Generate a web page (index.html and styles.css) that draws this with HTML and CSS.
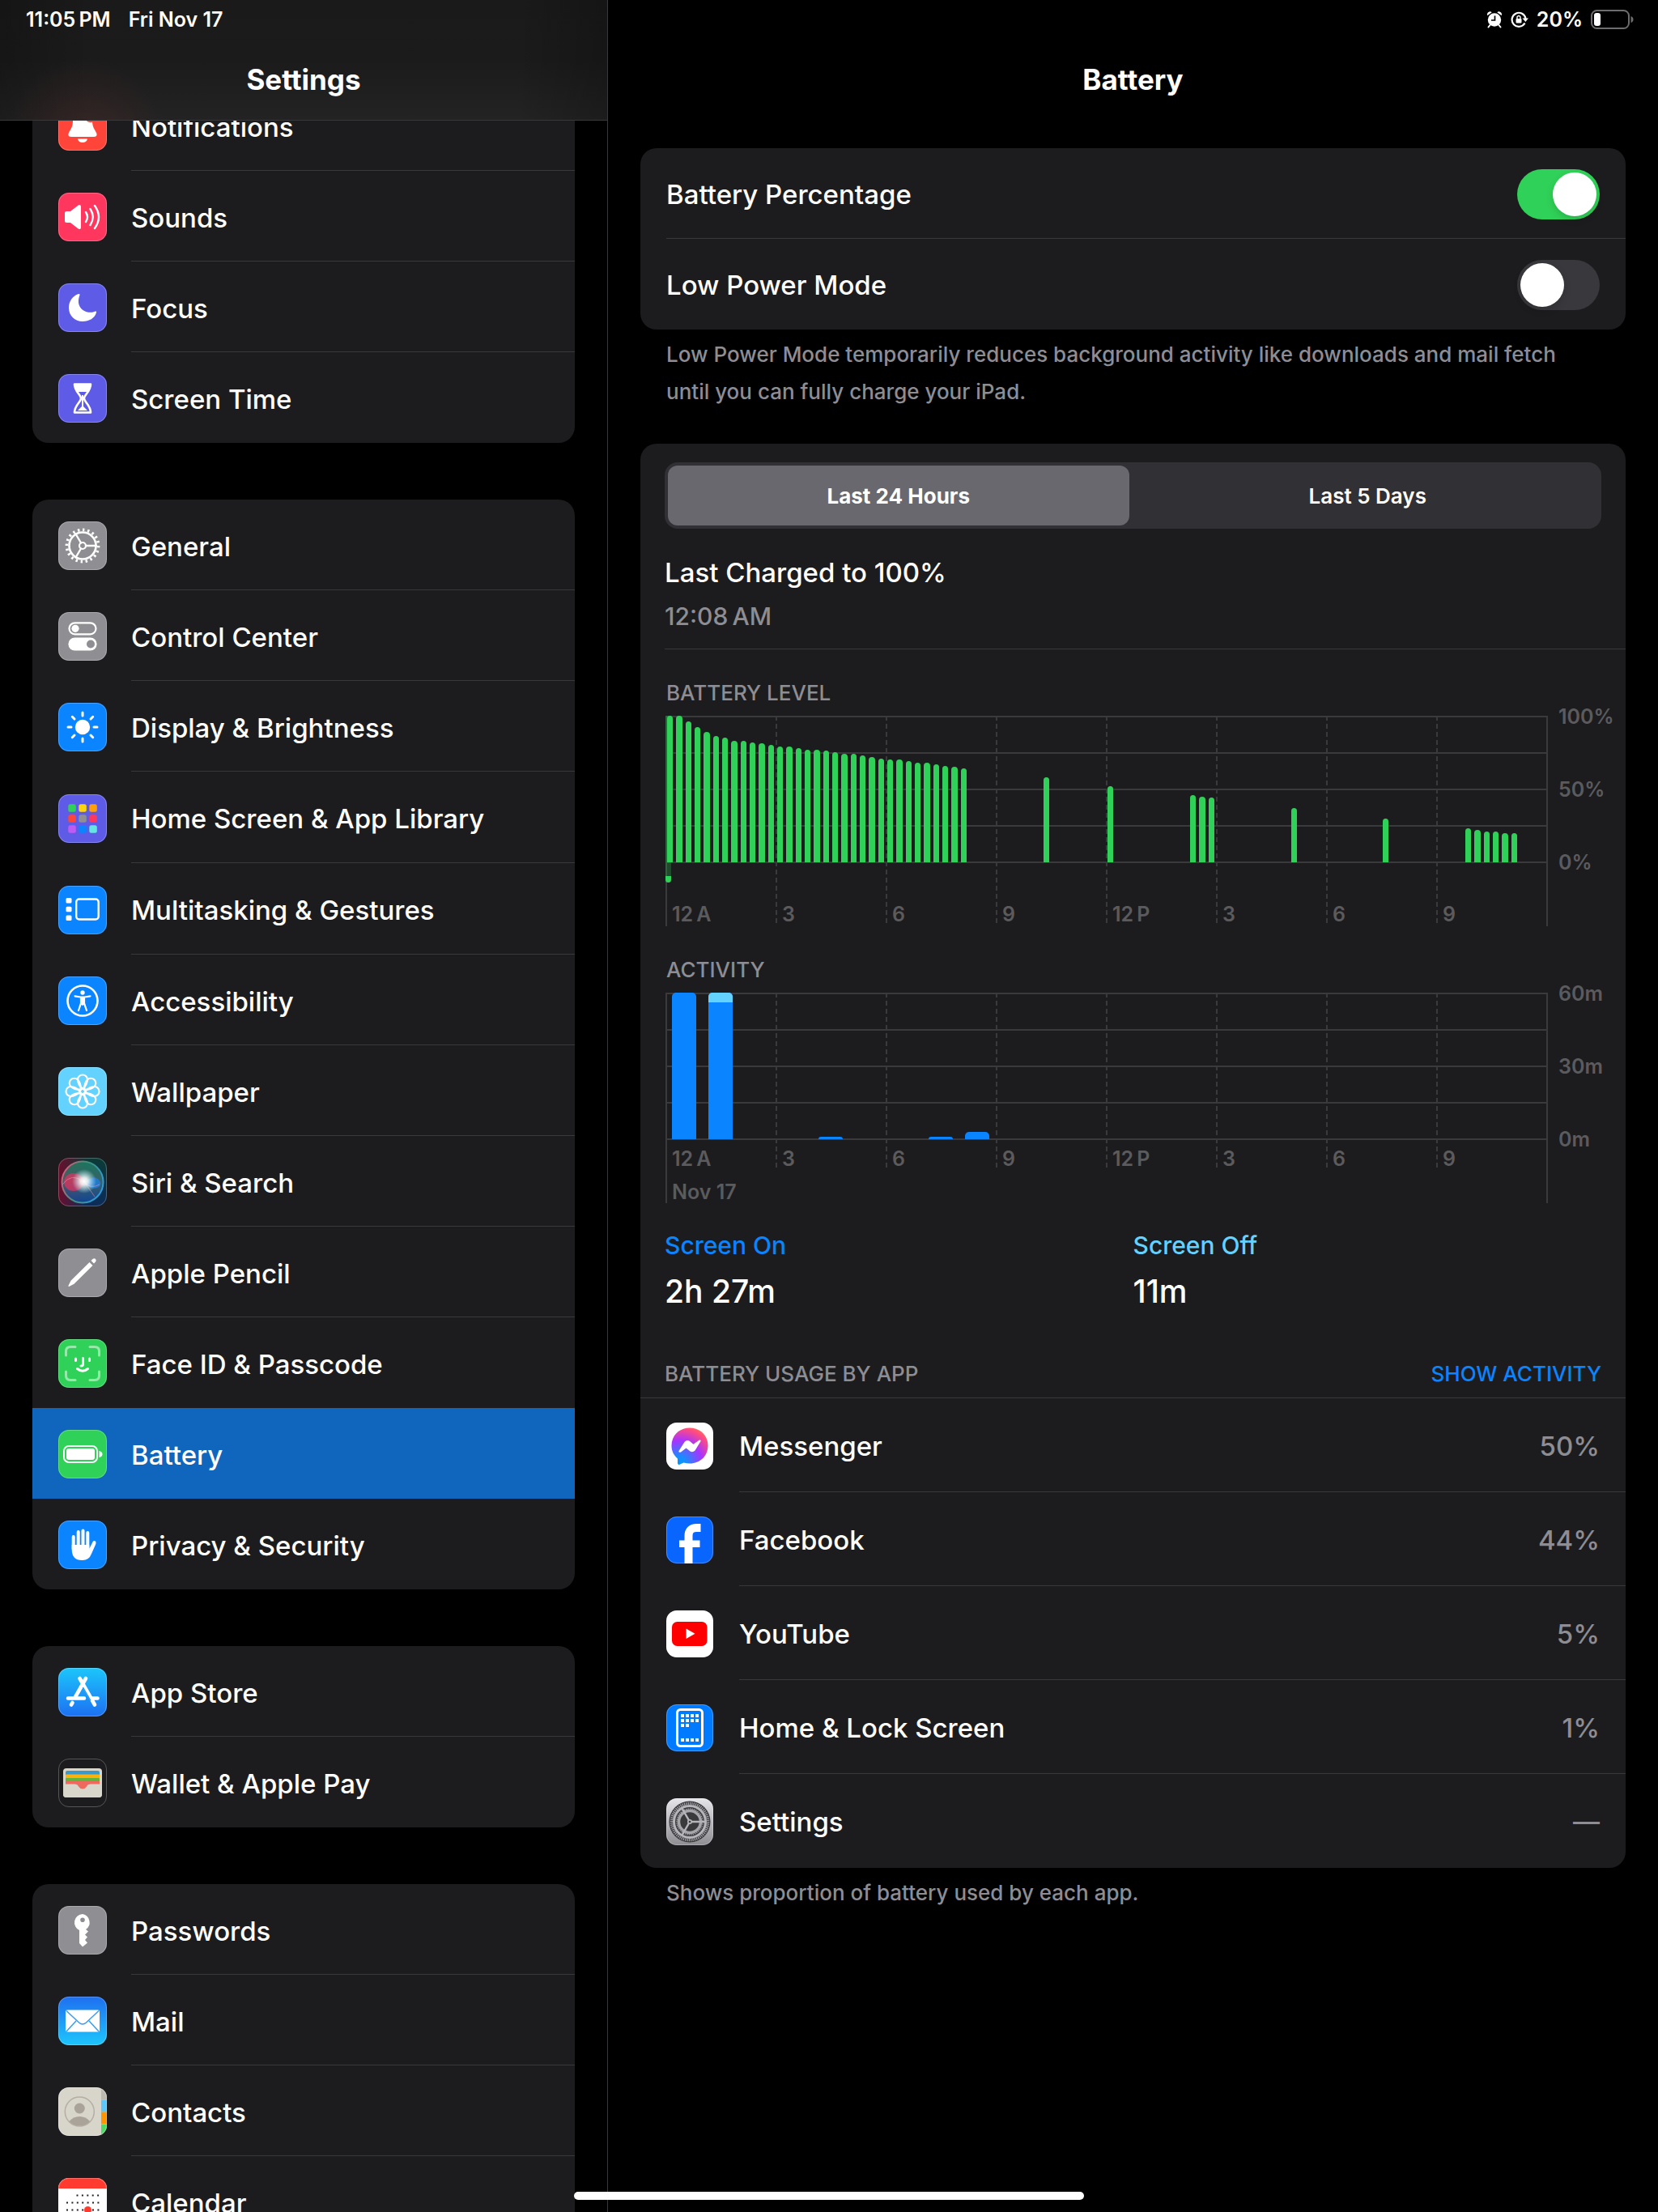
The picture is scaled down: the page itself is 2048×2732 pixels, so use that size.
FILE: index.html
```html
<!DOCTYPE html>
<html lang="en">
<head>
  <meta charset="UTF-8" />
  <meta name="viewport" content="width=device-width, initial-scale=1.0"/>
  <title>Settings - Battery</title>
  <link rel="stylesheet" href="styles.css">
</head>
<body>
  <div class="app">

    <aside class="sidebar">
      <header class="topbar sidebar-top">
        <div class="status">
          <span>11:05&thinsp;PM</span>
          <span>Fri Nov 17</span>
        </div>
        <h2 class="title">Settings</h2>
      </header>

      <nav class="menu">
        <div class="card">
          <a class="row" href="#notifications">
            <svg class="icon red" viewBox="0 0 60 60"><path fill="#fff" d="M30 9c-8 0-12 6-12 14 0 8-3 11-5 15-1 2-1 5 3 5h28c4 0 4-3 3-5-2-4-5-7-5-15 0-8-4-14-12-14zM24 45.500h12c-1 6-11 6-12 0z"/><circle cx="40" cy="17" r="7" fill="#fff" stroke="#ff453a" stroke-width="2.500"/></svg>
            <span class="label">Notifications</span>
          </a>
          <a class="row" href="#sounds">
            <svg class="icon pink" viewBox="0 0 60 60"><path fill="#fff" d="M10 23h5l9-7c2-2 4-1 4 1v26c0 2-2 3-4 1l-9-7h-5q-2 0-2-2V25q0-2 2-2z"/><path class="stroke" stroke-width="2.400" d="M34 24q4 6 0 12M39.500 20q6.500 10 0 20M45 16q10 14 0 28"/></svg>
            <span class="label">Sounds</span>
          </a>
          <a class="row" href="#focus">
            <svg class="icon indigo" viewBox="0 0 60 60"><path fill="#fff" d="M25 13C18 15 13 22 13 30c0 10 7.500 17 17 17 8 0 15-4 17-11 .5-1.500-.5-2-2-1.300-3 1.300-6 1.300-8 1C28 34 22 26 26.500 14.500q.5-2-1.500-1.500z"/></svg>
            <span class="label">Focus</span>
          </a>
          <a class="row" href="#screen-time">
            <svg class="icon indigo" viewBox="0 0 60 60"><path class="stroke" stroke-width="2.600" stroke-linejoin="round" d="M20 12.500h20c0 9-8 13-8 17.500s8 8.500 8 17.500H20c0-9 8-13 8-17.500s-8-8.500-8-17.500z"/><path fill="#fff" d="M20 12h20v5q-1 3-3 5H23q-2-2-3-5zM29 26h2v14l5 5H24l5-5z"/></svg>
            <span class="label">Screen Time</span>
          </a>
        </div>

        <div class="card">
          <a class="row" href="#general">
            <svg class="icon gray" viewBox="0 0 60 60"><g class="stroke"><circle cx="30" cy="30" r="16.500" stroke-width="2.600"/><circle cx="30" cy="30" r="19.600" stroke-width="3.600" pathLength="40" stroke-dasharray=".8 1.200" stroke-linecap="butt"/><circle cx="30" cy="30" r="4" stroke-width="2.200"/><path stroke-width="2.400" d="M34 30h13M28 26.500l-6.500-11M28 33.500l-6.500 11"/></g></svg>
            <span class="label">General</span>
          </a>
          <a class="row" href="#control-center">
            <svg class="icon gray" viewBox="0 0 60 60"><rect class="stroke" x="13.500" y="13.300" width="33" height="14" rx="7" stroke-width="2.200"/><circle cx="21" cy="20.300" r="4.600" fill="#fff"/><rect x="12.400" y="31.500" width="35.200" height="16" rx="8" fill="#fff"/><circle cx="40" cy="39.500" r="5" fill="#8e8e93"/></svg>
            <span class="label">Control Center</span>
          </a>
          <a class="row" href="#display">
            <svg class="icon blue" viewBox="0 0 60 60"><circle cx="30" cy="30" r="9.200" fill="#fff"/><path class="stroke" stroke-width="3" d="M30 12v4M30 44v4M12 30h4M44 30h4M17.300 17.300l2.700 2.700M40 40l2.700 2.700M42.700 17.300L40 20M20 40l-2.700 2.700"/></svg>
            <span class="label">Display &amp; Brightness</span>
          </a>
          <a class="row row-tall" href="#home-screen">
            <svg class="icon indigo" viewBox="0 0 60 60"><rect x="12.300" y="12.300" width="9.500" height="9.500" rx="2.500" fill="#30d158"/><rect x="25.300" y="12.300" width="9.500" height="9.500" rx="2.500" fill="#ffd60a"/><rect x="38.300" y="12.300" width="9.500" height="9.500" rx="2.500" fill="#ff9f0a"/><rect x="12.300" y="25.300" width="9.500" height="9.500" rx="2.500" fill="#ff453a"/><rect x="25.300" y="25.300" width="9.500" height="9.500" rx="2.500" fill="#8e8e93"/><rect x="38.300" y="25.300" width="9.500" height="9.500" rx="2.500" fill="#ff375f"/><rect x="12.300" y="38.300" width="9.500" height="9.500" rx="2.500" fill="#bf5af2"/><rect x="25.300" y="38.300" width="9.500" height="9.500" rx="2.500" fill="#0a84ff"/><rect x="38.300" y="38.300" width="9.500" height="9.500" rx="2.500" fill="#63e6e2"/></svg>
            <span class="label">Home Screen &amp; App Library</span>
          </a>
          <a class="row row-tall" href="#multitasking">
            <svg class="icon blue" viewBox="0 0 60 60"><g fill="#fff"><rect x="9.500" y="15" width="7" height="6.500" rx="1.500"/><rect x="9.500" y="25.800" width="7" height="6.500" rx="1.500"/><rect x="9.500" y="36.500" width="7" height="6.500" rx="1.500"/></g><rect class="stroke" x="22.200" y="16.500" width="27.500" height="25" rx="3.500" stroke-width="2.400"/></svg>
            <span class="label">Multitasking &amp; Gestures</span>
          </a>
          <a class="row" href="#accessibility">
            <svg class="icon blue" viewBox="0 0 60 60"><circle class="stroke" cx="30" cy="30" r="18.500" stroke-width="2.600"/><circle cx="30" cy="20" r="2.700" fill="#fff"/><path class="stroke" stroke-width="2.200" d="M20.500 24.300l7 1.200h5l7-1.200M28 26v7l-3 9M32 26v7l3 9"/><path fill="#fff" d="M27 25h6v9l-3 2-3-2z"/></svg>
            <span class="label">Accessibility</span>
          </a>
          <a class="row" href="#wallpaper">
            <svg class="icon sky" viewBox="0 0 60 60"><g class="stroke" stroke-width="2.200"><path id="petal" d="M30 27C25 22 24 19.500 24 15.500a6 6 0 0 1 12 0C36 19.500 35 22 30 27z"/><use href="#petal" transform="rotate(45 30 30)"/><use href="#petal" transform="rotate(90 30 30)"/><use href="#petal" transform="rotate(135 30 30)"/><use href="#petal" transform="rotate(180 30 30)"/><use href="#petal" transform="rotate(225 30 30)"/><use href="#petal" transform="rotate(270 30 30)"/><use href="#petal" transform="rotate(315 30 30)"/><circle cx="30" cy="30" r="3.500"/></g></svg>
            <span class="label">Wallpaper</span>
          </a>
          <a class="row" href="#siri">
            <svg class="icon siri" viewBox="0 0 60 60">
              <defs>
                <radialGradient id="glow"><stop offset="0" stop-color="#fff"/><stop offset=".3" stop-color="#fff" stop-opacity=".85"/><stop offset="1" stop-color="#bff" stop-opacity="0"/></radialGradient>
                <linearGradient id="orb" x1="0" y1=".3" x2="1" y2=".7"><stop offset="0" stop-color="#d0607a"/><stop offset=".45" stop-color="#3f8f7c"/><stop offset="1" stop-color="#2f9be0"/></linearGradient>
                <linearGradient id="orb-fill" x1=".5" y1="0" x2=".5" y2="1"><stop offset="0" stop-color="#1e8a68"/><stop offset=".5" stop-color="#4b6f76"/><stop offset="1" stop-color="#0f4ea8"/></linearGradient>
              </defs>
              <circle cx="30" cy="30" r="25" fill="url(#orb-fill)" opacity=".75"/>
              <circle cx="30" cy="30" r="25.500" fill="none" stroke="url(#orb)" stroke-width="2"/>
              <ellipse cx="19" cy="30" rx="12" ry="11" fill="#e8315f" opacity=".7"/>
              <path d="M32 31q9-10 17-5 6 6 1 10-9 5-18-5z" fill="#1f7ee0" opacity=".8"/>
              <path d="M5 33q12-16 26-3 9 9 20 3M33 31l12 17" fill="none" stroke="#ff9db6" stroke-opacity=".5"/>
              <circle cx="32" cy="29" r="15" fill="url(#glow)"/>
            </svg>
            <span class="label">Siri &amp; Search</span>
          </a>
          <a class="row" href="#pencil">
            <svg class="icon gray" viewBox="0 0 60 60"><path fill="#fff" d="M13.300 47q-1.300 0-.8-1.300l3-6L38.500 17l4 4L19.500 43.800zM40.500 15l2-2q2-1.500 3.500 0t0 3.500l-2 2z"/></svg>
            <span class="label">Apple Pencil</span>
          </a>
          <a class="row" href="#face-id">
            <svg class="icon green" viewBox="0 0 60 60"><path class="stroke" stroke-width="3" opacity=".5" d="M9.500 20v-5q0-5.500 5.500-5.500h6M50.500 20v-5q0-5.500-5.500-5.500h-6M9.500 40v5q0 5.500 5.500 5.500h6M50.500 40v5q0 5.500-5.500 5.500h-6"/><path class="stroke" stroke-width="3" d="M21.500 24v2.500M38.500 24v2.500M30.500 23.500v7.500q0 2-2.500 2M23.500 36.500q6.500 5.500 13 0"/></svg>
            <span class="label">Face ID &amp; Passcode</span>
          </a>
          <a class="row selected" href="#battery">
            <svg class="icon green" viewBox="0 0 60 60"><rect class="stroke" x="7" y="20" width="41" height="20" rx="6" stroke-width="2"/><rect x="10" y="23" width="35" height="14" rx="3" fill="#fff"/><path fill="#fff" d="M50.500 26q4 1 4 4t-4 4z"/></svg>
            <span class="label">Battery</span>
          </a>
          <a class="row" href="#privacy">
            <svg class="icon blue" viewBox="0 0 60 60"><path class="stroke" stroke-width="4" d="M18.700 20v15M24.700 14v20M30.500 12.500V34M36.300 15v20M44.500 27l-6 12"/><path fill="#fff" d="M16.700 30h21.600v6l7-8q1.500-1 1 1L41 41q-3 8-11 8h-1q-12 0-12.300-13z"/></svg>
            <span class="label">Privacy &amp; Security</span>
          </a>
        </div>

        <div class="card">
          <a class="row" href="#app-store">
            <svg class="icon store" viewBox="0 0 60 60"><path class="stroke" stroke-width="4.600" d="M34 13L21 36M26.500 13L45 45.500M17.500 43L16 45.500M12 37.500h20M42.500 37.500h6"/><path stroke="#1d94f7" stroke-width="1.300" fill="none" d="M30.500 24L40 40.500"/></svg>
            <span class="label">App Store</span>
          </a>
          <a class="row" href="#wallet">
            <svg class="icon wallet" viewBox="0 0 60 60"><rect x="6" y="12" width="48" height="36" rx="4" fill="#d9d6cc"/><rect x="9" y="15" width="42" height="8" rx="2" fill="#3b99c9"/><rect x="9" y="19.500" width="42" height="8" rx="1" fill="#fdb10a"/><rect x="9" y="24" width="42" height="8" rx="1" fill="#62b53c"/><path d="M9 28h42v5H40q-4 5-10 5t-10-5H9z" fill="#ee6a5f"/><path d="M6 31.500h14q4 0 5 3 2 3 5 3t5-3q1-3 5-3h14V44q0 4-4 4H10q-4 0-4-4z" fill="#d9d6cc"/></svg>
            <span class="label">Wallet &amp; Apple Pay</span>
          </a>
        </div>

        <div class="card">
          <a class="row" href="#passwords">
            <svg class="icon gray" viewBox="0 0 60 60"><path fill="#fff" fill-rule="evenodd" d="M30 10a10.500 10.500 0 0 0-4 20v16l4 4.500 6-5-3-3.500 3-3.500-3-3 4-4-3-2.500A10.500 10.500 0 0 0 30 10zm0 4.500a2.800 2.800 0 1 1 0 5.600 2.800 2.800 0 0 1 0-5.600z"/></svg>
            <span class="label">Passwords</span>
          </a>
          <a class="row" href="#mail">
            <svg class="icon mail" viewBox="0 0 60 60"><rect x="9" y="16.500" width="42" height="27" rx="2" fill="#fff"/><path fill="none" stroke="#3a9cf5" stroke-width="1.500" d="M10 17.500l15.500 14.500q4.500 4 9 0L50 17.500M10 43l12-13M50 43L38 30"/></svg>
            <span class="label">Mail</span>
          </a>
          <a class="row" href="#contacts">
            <svg class="icon contacts" viewBox="0 0 60 60"><path fill="#bcb9b1" d="M53 0h7v15h-7z"/><path fill="#5ac8fa" d="M53 15.500h7v15h-7z"/><path fill="#ff9500" d="M53 30.500h7v15h-7z"/><path fill="#4cd964" d="M53 46h7v14h-7z"/><circle cx="26.300" cy="30" r="18" fill="none" stroke="#b5afa3" stroke-width="1.500"/><circle cx="26.300" cy="26" r="6.500" fill="#aaa39a"/><path fill="#aaa39a" d="M13.500 42q5-6 12.800-6t12.800 6q-5 5.500-12.800 5.500T13.500 42z"/></svg>
            <span class="label">Contacts</span>
          </a>
          <a class="row" href="#calendar">
            <svg class="icon calendar" viewBox="0 0 60 60"><path fill="#ff3b30" d="M0 0h60v13H0z"/><path stroke="#222" stroke-width="2" stroke-dasharray="2 4.400" d="M22.500 21.500h28M10 30.500h41M10 39.500h41M10 48.500h30"/><circle cx="36.500" cy="39.500" r="4.500" fill="#ff3b30"/></svg>
            <span class="label">Calendar</span>
          </a>
        </div>
      </nav>
    </aside>

    <main class="detail">
      <header class="topbar">
        <div class="status status-right">
          <svg class="status-icon" viewBox="0 0 20 22"><circle cx="10" cy="11.500" r="8.200" fill="#fff"/><path fill="#fff" d="M1.200 6.200q-1-4 3-5 2 0 2.500 1zM18.800 6.200q1-4-3-5-2 0-2.500 1z"/><path stroke="#fff" stroke-width="2" stroke-linecap="round" d="M4.500 18l-2 2.500M15.500 18l2 2.500"/><path fill="none" stroke="#000" stroke-width="1.700" d="M10.500 6.500V12H6"/></svg>
          <svg class="status-icon" viewBox="0 0 22 22"><path fill="none" stroke="#fff" stroke-width="2.200" d="M17.500 15.500a8.500 8.500 0 1 1 1-5.500"/><path fill="#fff" d="M14.500 9.500H22L18.300 14z"/><rect x="6.500" y="10" width="7" height="5.500" rx="1" fill="#fff"/><path fill="none" stroke="#fff" stroke-width="1.400" d="M8 10V8q2-3 4 0v2"/></svg>
          <span class="percent">20%</span>
          <svg class="battery-icon" viewBox="0 0 52 24"><rect x="1" y="1" width="46" height="22" rx="6.500" fill="none" stroke="#6c6c6e" stroke-width="2"/><rect x="4" y="4" width="8" height="16" rx="3" fill="#fff"/><path fill="#6c6c6e" d="M49.500 8q3 1 3 4t-3 4z"/></svg>
        </div>
        <h1 class="title">Battery</h1>
      </header>

      <div class="content">
        <section class="card">
          <div class="row">
            <div class="label split">
              <label for="battery-percentage">Battery Percentage</label>
              <input type="checkbox" class="switch" id="battery-percentage" checked>
            </div>
          </div>
          <div class="row">
            <div class="label split">
              <label for="low-power">Low Power Mode</label>
              <input type="checkbox" class="switch" id="low-power">
            </div>
          </div>
        </section>
        <p class="footnote">Low Power Mode temporarily reduces background activity like downloads and mail fetch until you can fully charge your iPad.</p>

        <section class="card usage">
          <div class="segmented">
            <button type="button" class="segment active">Last 24 Hours</button>
            <button type="button" class="segment">Last 5 Days</button>
          </div>

          <div class="last-charged">
            <div class="charged-title">Last Charged to 100%</div>
            <div class="charged-time">12:08&thinsp;AM</div>
          </div>

          <h3 class="caption">BATTERY LEVEL</h3>
          <div class="chart level-chart">
            <div class="plot">
              <div class="lines"></div>
              <div class="hours">
                <div class="hour">12&thinsp;A</div>
                <div class="hour">3</div>
                <div class="hour">6</div>
                <div class="hour">9</div>
                <div class="hour">12&thinsp;P</div>
                <div class="hour">3</div>
                <div class="hour">6</div>
                <div class="hour">9</div>
              </div>
              <div class="charging"></div>
              <div class="bars" id="level-bars"></div>
            </div>
            <div class="scale"><span>100%</span><span>50%</span><span>0%</span></div>
          </div>

          <h3 class="caption">ACTIVITY</h3>
          <div class="chart activity-chart">
            <div class="plot">
              <div class="lines"></div>
              <div class="hours">
                <div class="hour">12&thinsp;A<div class="day">Nov 17</div></div>
                <div class="hour">3</div>
                <div class="hour">6</div>
                <div class="hour">9</div>
                <div class="hour">12&thinsp;P</div>
                <div class="hour">3</div>
                <div class="hour">6</div>
                <div class="hour">9</div>
              </div>
              <div class="bars" id="activity-bars"></div>
            </div>
            <div class="scale"><span>60m</span><span>30m</span><span>0m</span></div>
          </div>

          <div class="totals">
            <div class="total">
              <div class="total-name screen-on">Screen On</div>
              <div class="total-value">2h 27m</div>
            </div>
            <div class="total">
              <div class="total-name screen-off">Screen Off</div>
              <div class="total-value">11m</div>
            </div>
          </div>

          <div class="apps-head">
            <h3>BATTERY USAGE BY APP</h3>
            <button type="button" class="link-btn">SHOW ACTIVITY</button>
          </div>

          <div class="row app-row">
            <svg class="icon white" viewBox="0 0 58 58">
              <defs><radialGradient id="msgr" cx=".2" cy="1" r="1.100"><stop offset="0" stop-color="#0099ff"/><stop offset=".2" stop-color="#1a8cff"/><stop offset=".6" stop-color="#a933ff"/><stop offset=".9" stop-color="#ff4b80"/><stop offset="1" stop-color="#ff6a60"/></radialGradient></defs>
              <path fill="url(#msgr)" d="M29 6.500C16 6.500 6.500 16 6.500 28.500c0 7 3 12 7.500 16v6q.5 2 2.500 1.200l5-2.200q3.500 1 7.500 1C42 50.500 51.500 41 51.500 28.500S42 6.500 29 6.500z"/>
              <path fill="#fff" d="M15.500 35l7-11q3-3.500 6.500-1l4.500 3.800 7-5q2.500-1 2 1.200l-7 11.500q-3 3-6 1L24.500 31.500 18 36.500q-3 1-2.500-1.500z"/>
            </svg>
            <div class="label split"><span>Messenger</span><span class="share">50%</span></div>
          </div>
          <div class="row app-row">
            <svg class="icon facebook" viewBox="0 0 58 58"><path fill="none" stroke="#fff" stroke-width="10" d="M27.500 58V24q0-10 10-10h5"/><path fill="none" stroke="#fff" stroke-width="8.500" d="M16 33.700h25.500"/></svg>
            <div class="label split"><span>Facebook</span><span class="share">44%</span></div>
          </div>
          <div class="row app-row">
            <svg class="icon white" viewBox="0 0 58 58"><rect x="7" y="14" width="43.500" height="30" rx="6.500" fill="#f00"/><path fill="#fff" d="M24.500 22.500v12.500l11-6.200z"/></svg>
            <div class="label split"><span>YouTube</span><span class="share">5%</span></div>
          </div>
          <div class="row app-row">
            <svg class="icon azure" viewBox="0 0 58 58"><rect x="13.500" y="6.500" width="31" height="45" rx="4" fill="none" stroke="#fff" stroke-width="3"/><path fill="none" stroke="#fff" stroke-width="4" stroke-dasharray="4 2" d="M18 14h22M18 20h22M18 26h10M18 44h22"/></svg>
            <div class="label split"><span>Home &amp; Lock Screen</span><span class="share">1%</span></div>
          </div>
          <div class="row app-row">
            <svg class="icon settings" viewBox="0 0 58 58"><circle cx="29" cy="29" r="25.500" fill="#3a3a3d"/><circle cx="29" cy="29" r="22.500" fill="none" stroke="#a5a5aa" stroke-width="3.500" pathLength="120" stroke-dasharray="1 1"/><circle cx="29" cy="29" r="19.500" fill="none" stroke="#b5b5ba" stroke-width="3"/><circle cx="29" cy="29" r="13.500" fill="none" stroke="#a5a5aa" stroke-width="3.500"/><circle cx="29" cy="29" r="16" fill="none" stroke="#a5a5aa" stroke-width="1.500" pathLength="80" stroke-dasharray="1 1"/><path stroke="#b5b5ba" stroke-width="2.500" d="M29 29h19M29 29l-9.500-16.500M29 29l-9.500 16.500"/><circle cx="29" cy="29" r="3" fill="#b5b5ba"/><circle cx="29" cy="29" r="1.300" fill="#3a3a3d"/></svg>
            <div class="label split"><span>Settings</span><span class="share">—</span></div>
          </div>
        </section>
        <p class="footnote">Shows proportion of battery used by each app.</p>
      </div>
    </main>
  </div>

  <div class="home-indicator"></div>

  <script>
    // battery level in percent, keyed by the quarter hour it starts at
    const levels = {
      0: [100, 100, 96, 92, 89, 86, 85, 83, 83, 82, 81, 80, 79, 79, 78, 77, 77, 76, 75, 74, 74, 73, 72, 71, 70, 70, 69, 68, 68, 67, 66, 65, 64],
      41: [58],
      48: [52],
      57: [46, 45, 44],
      68: [37],
      78: [30],
      87: [23, 22, 21, 21, 20, 20]
    };

    // minutes per hour
    const activity = [
      { hour: 0, on: 60, off: 0 },
      { hour: 1, on: 56, off: 4 },
      { hour: 4, on: 1, off: 0 },
      { hour: 7, on: 1, off: 0 },
      { hour: 8, on: 3, off: 0 }
    ];

    const levelBars = document.getElementById("level-bars");
    for (const start in levels) {
      levels[start].forEach((value, i) => {
        const bar = document.createElement("div");
        bar.className = "bar";
        bar.style.gridColumn = Number(start) + i + 1;
        bar.style.height = value + "%";
        levelBars.appendChild(bar);
      });
    }

    const activityBars = document.getElementById("activity-bars");
    activity.forEach(a => {
      const total = a.on + a.off;
      const bar = document.createElement("div");
      bar.className = "bar";
      bar.style.gridColumn = a.hour + 1;
      bar.style.height = (total / 60 * 100) + "%";
      if (a.off > 0) {
        const off = document.createElement("div");
        off.className = "off";
        off.style.height = (a.off / total * 100) + "%";
        bar.appendChild(off);
      }
      activityBars.appendChild(bar);
    });
  </script>
</body>
</html>
```
FILE: styles.css
```css
* {
  box-sizing: border-box;
}

body {
  margin: 0;
  background: #000;
  color: #fff;
  font-family: Inter, "Liberation Sans", sans-serif;
  font-size: 33px;
  font-weight: 500;
}

h1, h2, h3, p {
  margin: 0;
}

button {
  border: none;
  background: none;
  color: inherit;
  font-family: inherit;
  cursor: pointer;
}

.app {
  display: flex;
  height: 100vh;
  overflow: hidden;
}

/* left column */

.sidebar {
  width: 751px;
  max-width: 37%;
  flex-shrink: 0;
  overflow: hidden;
  border-right: 1px solid #38383a;
}

.topbar {
  height: 149px;
  padding-top: 10px;
}

.sidebar-top {
  position: relative;
  z-index: 1;
  border-bottom: 1px solid #38383a;
  background:
    radial-gradient(circle at 14% 115%, rgba(255, 69, 58, 0.09), transparent 100px),
    linear-gradient(to right, rgba(0, 0, 0, 0.2), transparent 15%, transparent 85%, rgba(0, 0, 0, 0.2)),
    linear-gradient(#1a1a1a, #1b1b1b 50%, #232323);
}

.status {
  display: flex;
  gap: 22px;
  height: 28px;
  padding: 0 32px;
  font-size: 25px;
  line-height: 28px;
  font-weight: 600;
}

.status-right {
  justify-content: flex-end;
  align-items: center;
  gap: 10px;
  padding-right: 31px;
}

.status-icon {
  height: 22px;
}

.battery-icon {
  width: 52px;
  height: 24px;
  overflow: visible;
}

.title {
  margin-top: 40px;
  text-align: center;
  font-size: 35px;
  line-height: 40px;
  font-weight: 700;
}

.menu {
  display: flex;
  flex-direction: column;
  gap: 70px;
  margin-top: -50px;
  padding: 0 40px;
}

.card {
  background: #1c1c1e;
  border-radius: 20px;
  overflow: hidden;
}

/* rows */

.row {
  display: flex;
  align-items: center;
  height: 112px;
  padding: 2px 0 0 32px;
  color: #fff;
  text-decoration: none;
}

.row-tall {
  height: 113px;
}

.label {
  flex: 1;
  align-self: stretch;
  display: flex;
  align-items: center;
  padding-top: 2px;
  border-bottom: 1px solid #38383a;
  white-space: nowrap;
}

.row:last-child .label,
.selected .label,
.row:has(+ .selected) .label {
  border-bottom-color: transparent;
}

.selected {
  background: #1065bd;
}

.split {
  justify-content: space-between;
  padding-top: 0;
  padding-right: 32px;
}

.icon {
  width: 60px;
  height: 60px;
  margin-right: 30px;
  border-radius: 13px;
  outline: 1px solid rgba(255, 255, 255, 0.25);
  outline-offset: -1px;
}

.stroke {
  fill: none;
  stroke: #fff;
  stroke-linecap: round;
}

.red { background: #ff453a; }
.pink { background: #ff375f; }
.indigo { background: #5e5ce6; }
.gray { background: #8e8e93; }
.blue { background: #0a84ff; }
.sky { background: #64d2ff; }
.green { background: #30d158; }
.white { background: #fff; }
.facebook { background: #0866ff; }
.azure { background: #007aff; }
.wallet { background: #1c1c1e; }
.contacts { background: #d8d5cb; }
.calendar { background: #fff; }
.store { background: linear-gradient(#1cc6fb, #1d70f2); }
.mail { background: linear-gradient(#1f6ff0, #1dc6fb); }
.settings { background: linear-gradient(#e5e5ea, #8e8e93); }

.siri {
  background:
    linear-gradient(to right, #6b0d2c, transparent 60%),
    linear-gradient(#0c3b36, #0b2c5a);
}

/* right column */

.detail {
  flex: 1;
  min-width: 0;
}

.content {
  padding: 34px 40px 0;
}

.switch {
  appearance: none;
  width: 102px;
  height: 62px;
  margin: 0;
  padding: 4px;
  border-radius: 31px;
  background: #39393d;
  cursor: pointer;
}

.switch::before {
  content: "";
  display: block;
  width: 54px;
  height: 54px;
  border-radius: 50%;
  background: #fff;
  box-shadow: 0 4px 10px rgba(0, 0, 0, 0.15);
}

.switch:checked {
  background: #30d158;
}

.switch:checked::before {
  margin-left: 40px;
}

.footnote {
  padding: 8px 32px 0;
  color: #8d8d93;
  font-size: 26px;
  line-height: 46px;
}

.usage {
  margin-top: 41px;
  padding-top: 23px;
}

.segmented {
  display: flex;
  gap: 10px;
  height: 82px;
  margin: 0 30px;
  padding: 4px;
  border-radius: 16px;
  background: #313035;
}

.segment {
  flex: 1;
  border-radius: 12px;
  color: #fff;
  font-size: 26px;
  font-weight: 600;
}

.segment.active {
  background: #69686e;
  font-weight: 700;
}

.last-charged {
  margin-left: 30px;
  padding: 34px 0 22px;
  border-bottom: 1px solid #38383a;
}

.charged-title {
  line-height: 40px;
}

.charged-time {
  margin-top: 16px;
  color: #8d8d93;
  font-size: 30px;
  line-height: 36px;
}

.caption {
  margin: 38px 32px 12px;
  color: #8d8d93;
  font-size: 26px;
  line-height: 32px;
  font-weight: 500;
}

.chart {
  display: grid;
  grid-template-columns: 1fr 96px;
  height: 260px;
  margin-left: 31px;
  color: #5b5b5e;
  font-size: 25px;
  line-height: 24px;
  font-weight: 600;
}

/* lines, hour ticks and bars share one cell */
.plot {
  display: grid;
  border-right: 2px solid #3a3a3c;
}

.plot > * {
  grid-area: 1 / 1;
}

.lines {
  height: 182px;
  background: repeating-linear-gradient(#3a3a3c 0 2px, transparent 2px 45px);
}

.hours {
  display: grid;
  grid-template-columns: repeat(8, 1fr);
  align-items: start;
}

.hour {
  height: 256px;
  padding: 233px 0 0 6px;
  border-left: 2px dashed #3a3a3c;
}

.activity-chart .hour {
  height: 216px;
  padding-top: 193px;
}

.hours .hour:first-child {
  height: 260px;
  border-left-style: solid;
}

.day {
  margin-top: 17px;
}

.bars {
  display: grid;
  grid-template-columns: repeat(96, 1fr);
  align-items: end;
  justify-items: center;
  height: 181px;
}

.activity-chart .bars {
  grid-template-columns: repeat(24, 1fr);
}

.bar {
  width: 62%;
  border-radius: 4px 4px 0 0;
  background: #30d158;
}

.activity-chart .bar {
  width: 66%;
  border-radius: 5px 5px 0 0;
  background: #0a84ff;
  overflow: hidden;
}

.off {
  background: #64d2ff;
}

/* plugged-in period under the level bars */
.charging {
  width: 7px;
  height: 206px;
  background: rgba(48, 209, 88, 0.25);
  border-bottom: 8px solid #30d158;
  border-radius: 0 0 4px 4px;
}

.scale {
  display: flex;
  flex-direction: column;
  justify-content: space-between;
  height: 204px;
  margin-top: -11px;
  padding-left: 13px;
}

.totals {
  display: grid;
  grid-template-columns: 1fr 1fr;
  padding: 34px 30px 0;
}

.total-name {
  font-size: 30px;
  line-height: 36px;
}

.total-value {
  margin-top: 16px;
  font-size: 39px;
  line-height: 46px;
}

.screen-on { color: #0a84ff; }
.screen-off { color: #64d2ff; }

.apps-head {
  display: flex;
  justify-content: space-between;
  margin-top: 63px;
  padding: 0 30px 13px;
  border-bottom: 1px solid #38383a;
}

.apps-head h3,
.link-btn {
  padding: 0;
  font-size: 26px;
  line-height: 32px;
  font-weight: 500;
}

.apps-head h3 {
  color: #8d8d93;
}

.link-btn {
  color: #0a84ff;
}

.app-row {
  height: 116px;
}

.app-row .icon {
  width: 58px;
  height: 58px;
  margin-right: 32px;
}

.share {
  color: #8d8d93;
}

.home-indicator {
  position: fixed;
  left: 50%;
  bottom: 15px;
  width: 630px;
  height: 10px;
  margin-left: -315px;
  border-radius: 5px;
  background: #fff;
}
```
